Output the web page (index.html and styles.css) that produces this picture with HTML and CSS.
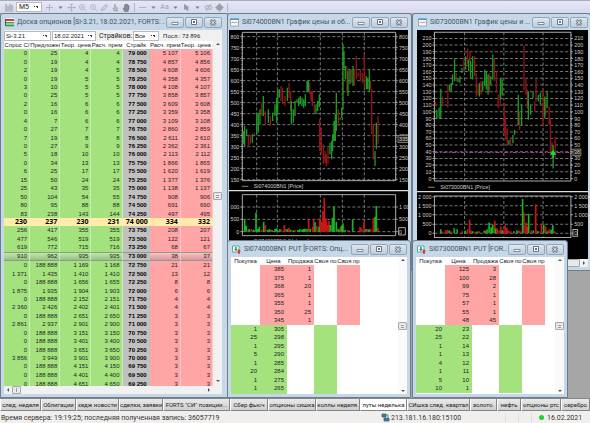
FILE: index.html
```html
<!DOCTYPE html>
<html lang="ru">
<head>
<meta charset="utf-8">
<title>Торговый терминал</title>
<link rel="stylesheet" href="styles.css">
</head>
<body>
<svg class="defs" aria-hidden="true">
  <symbol id="min" viewBox="0 0 16 9"><path d="M5 4.500h6v2H5z" fill="#fff" stroke="#68747f" stroke-width=".8"/></symbol>
  <symbol id="max" viewBox="0 0 16 9"><path d="M5.500 1.500h5v5h-5z" fill="#fff" stroke="#68747f"/><path d="M7 3h2v2h-2z" fill="#68747f"/></symbol>
  <symbol id="close" viewBox="0 0 16 9"><path d="M5.500 2l5 5m0-5l-5 5" stroke="#68747f" stroke-width="2.600"/><path d="M5.700 2.200l4.600 4.600m0-4.600l-4.600 4.600" stroke="#fff" stroke-width="1"/></symbol>
  <symbol id="chartico" viewBox="0 0 9 9"><path d="M.5 1h8v7h-8z" fill="#fff" stroke="#8eacc6"/><path d="M0 .500h9v1.500h-9z" fill="#4b9cc8"/><path d="M1.500 5l1.500-1 1.500 1 1.500-1 1.500 1" fill="none" stroke="#d0604c" stroke-width=".8"/></symbol>
  <symbol id="quoteico" viewBox="0 0 9 9"><path d="M.5 1h6.500v6h-6.500z" fill="#fff" stroke="#5f9fbd"/><path d="M2 4h1.200v-2h1.500v2h1.200l-2 2.300z" fill="#20a040"/><path d="M5 6.500l2-2.500 2 2.500h-1v2.300h-2v-2.300z" fill="#d93a32"/></symbol>
  <symbol id="boardico" viewBox="0 0 9 9"><path d="M1 0h8v9h-8z" fill="#f4f4f4"/><path d="M1 1h8v2h-8z" fill="#c5423b"/><path d="M1 4h8v1.500h-8z" fill="#35a04d"/><path d="M1 6.500h8v2h-8z" fill="#2e9b55"/><path d="M0 1h1v7h-1z" fill="#555"/></symbol>
</svg>

<header class="toolbar">
  <button aria-label="График"><svg viewBox="0 0 9 9"><path d="M1 1v7h7M3 7v-4M5 7v-6M7 7v-5" stroke="#999da8" stroke-width="1.200" fill="none"/></svg></button>
  <select class="frame" aria-label="Интервал"><option>M5</option></select>
  <button class="first" aria-label="Курсор"><svg viewBox="0 0 9 9"><path d="M4.500 1v7M1 4.500h7" stroke="#aeb1bd"/></svg></button>
  <button aria-label="Вид курсора"><svg viewBox="0 0 9 9"><path d="M2.500 3.500h4l-2 2.500z" fill="#777b86"/></svg></button>
  <button aria-label="Сдвиг"><svg viewBox="0 0 9 9"><path d="M4.500 1v7M1 4.500h7M3.300 2l1.200-1.200 1.200 1.200M3.300 7l1.200 1.200 1.200-1.200M2 3.300l-1.200 1.200 1.200 1.200M7 3.300l1.200 1.200-1.200 1.200" stroke="#a5a8b4" stroke-width=".8" fill="none"/></svg></button>
  <button aria-label="Увеличить"><svg viewBox="0 0 9 9"><circle cx="4" cy="4" r="2.500" fill="none" stroke="#b5b8c4"/><path d="M6 6l2 2M3 4h2M4 3v2" stroke="#b5b8c4"/></svg></button>
  <button aria-label="Уменьшить"><svg viewBox="0 0 9 9"><circle cx="4" cy="4" r="2.500" fill="none" stroke="#b5b8c4"/><path d="M6 6l2 2M3 4h2" stroke="#b5b8c4"/></svg></button>
  <button aria-label="Карандаш"><svg viewBox="0 0 9 9"><path d="M1.500 7.500l.5-2 4-4 1.500 1.500-4 4z" fill="#d5d7df" stroke="#9c9fab" stroke-width=".8"/></svg></button>
  <button aria-label="Выбор"><svg viewBox="0 0 9 9"><path d="M3 8l-1-3 1.500.500v-4h1v3h2v3.500z" fill="#b6b9c3" stroke="#999da8" stroke-width=".6"/></svg></button>
  <button aria-label="Рука"><svg viewBox="0 0 9 9"><path d="M2.500 8.500l-1.500-3.500 1.500.500v-3.500h1v-1h1v.5h1.200v1h1.300v3l-1 3z" fill="#858993" stroke="#666a75" stroke-width=".5"/></svg></button>
  <i class="rule"></i>
  <button aria-label="Линия"><svg viewBox="0 0 9 9"><path d="M1 4.500h7" stroke="#aeb1bd"/></svg></button>
  <button aria-label="Вид линии"><svg viewBox="0 0 9 9"><path d="M2.500 3.500h4l-2 2.500z" fill="#777b86"/></svg></button>
  <button aria-label="Текст">Aa</button>
  <button aria-label="Вид текста"><svg viewBox="0 0 9 9"><path d="M2.500 3.500h4l-2 2.500z" fill="#777b86"/></svg></button>
  <button aria-label="Метка"><svg viewBox="0 0 9 9"><path d="M2 1l5 3-1 1 1 2-2 1-1-2-2 1z" fill="#9699a5"/></svg></button>
  <button aria-label="Вид метки"><svg viewBox="0 0 9 9"><path d="M2.500 3.500h4l-2 2.500z" fill="#777b86"/></svg></button>
  <button aria-label="Скрыть"><svg viewBox="0 0 9 9"><ellipse cx="4.500" cy="4.500" rx="3.500" ry="2" fill="none" stroke="#a5a8b4"/><circle cx="4.500" cy="4.500" r="1" fill="#a5a8b4"/><path d="M2 8l5-7" stroke="#a5a8b4" stroke-width=".8"/></svg></button>
  <button aria-label="Слои"><svg viewBox="0 0 9 9"><path d="M4.500 0l1.500 2h1v1l2 1.500-2 1.500v1h-1l-1.500 2-1.500-2h-1v-1l-2-1.500 2-1.500v-1h1z" fill="#9ca0aa"/></svg></button>
  <i class="rule"></i>
</header>

<main class="desktop">
  <section class="window board">
    <div class="title"><svg class="ico"><use href="#boardico"/></svg><h2>Доска опционов [Si-3.21, 18.02.2021, FORTS: ...</h2>
      <button aria-label="Свернуть"><svg><use href="#min"/></svg></button><button aria-label="Развернуть"><svg><use href="#max"/></svg></button><button aria-label="Закрыть"><svg><use href="#close"/></svg></button></div>
    <div class="client">
      <form class="filters">
        <select class="contract" aria-label="Контракт"><option>Si-3.21</option></select>
        <select class="expiry" aria-label="Дата"><option>18.02.2021</option></select>
        <label for="strikes">Страйков:</label><select id="strikes" class="count"><option>Все</option></select>
        <span>Посл.: 73 896</span>
      </form>
      <div class="pane">
        <div class="clip">
          <table class="options">
            <colgroup><col class="c26"><col class="c30"><col class="c31"><col class="c31"><col class="c27"><col class="c31"><col class="c32"></colgroup>
            <thead><tr><th>Спрос С/</th><th>Предложен</th><th>Теор. цена</th><th>Расч. прем</th><th>Страйк</th><th>Расч. прем</th><th>Теор. цена (</th></tr></thead>
            <tbody id="options"></tbody>
          </table>
        </div>
        <div class="vbar"><i class="up"></i><i class="thumb"></i><i class="down"></i></div>
      </div>
      <div class="hbar"><i class="left"></i><i class="thumb"></i><i class="right"></i></div>
    </div>
  </section>

  <section class="window chart-a">
    <div class="title"><svg class="ico"><use href="#chartico"/></svg><h2>Si074000BN1 График цены и об...</h2>
      <button aria-label="Свернуть"><svg><use href="#min"/></svg></button><button aria-label="Развернуть"><svg><use href="#max"/></svg></button><button aria-label="Закрыть"><svg><use href="#close"/></svg></button></div>
    <div class="client dark"><svg id="chartA" class="chart" viewBox="12 87 537 690" preserveAspectRatio="xMinYMin slice" role="img" aria-label="Si074000BN1"></svg></div>
  </section>

  <section class="window chart-b">
    <div class="title"><svg class="ico"><use href="#chartico"/></svg><h2>Si073000BN1 График цены и ...</h2>
      <button aria-label="Свернуть"><svg><use href="#min"/></svg></button><button aria-label="Развернуть"><svg><use href="#max"/></svg></button><button aria-label="Закрыть"><svg><use href="#close"/></svg></button></div>
    <div class="client dark"><svg id="chartB" class="chart" viewBox="36 87 510 696" preserveAspectRatio="xMinYMin slice" role="img" aria-label="Si073000BN1"></svg>
      <div class="hbar"><i class="left"></i><i class="thumb wide"></i><i class="right"></i></div></div>
  </section>

  <section class="window book-a">
    <div class="title"><svg class="ico"><use href="#quoteico"/></svg><h2>Si074000BN1 PUT [FORTS: Опц...</h2>
      <button aria-label="Свернуть"><svg><use href="#min"/></svg></button><button aria-label="Развернуть"><svg><use href="#max"/></svg></button><button aria-label="Закрыть"><svg><use href="#close"/></svg></button></div>
    <div class="client pane">
      <div class="clip">
        <table class="book">
          <colgroup><col class="c29"><col class="c27"><col class="c27"><col class="c23"><col class="c23"><col></colgroup>
          <thead><tr><th>Покупка</th><th>Цена</th><th>Продажа</th><th>Своя по</th><th>Своя пр</th><th></th></tr></thead>
          <tbody id="bookA"></tbody>
        </table>
      </div>
      <div class="vbar"><i class="up"></i><i class="thumb mid"></i><i class="down"></i></div>
    </div>
  </section>

  <section class="window book-b">
    <div class="title"><svg class="ico"><use href="#quoteico"/></svg><h2>Si073000BN1 PUT [FOR...</h2>
      <button aria-label="Свернуть"><svg><use href="#min"/></svg></button><button aria-label="Развернуть"><svg><use href="#max"/></svg></button><button aria-label="Закрыть"><svg><use href="#close"/></svg></button></div>
    <div class="client pane">
      <div class="clip">
        <table class="book">
          <colgroup><col class="c29"><col class="c27"><col class="c27"><col class="c23"><col class="c23"><col></colgroup>
          <thead><tr><th>Покупка</th><th>Цена</th><th>Продажа</th><th>Своя по</th><th>Своя пр</th><th></th></tr></thead>
          <tbody id="bookB"></tbody>
        </table>
      </div>
      <div class="vbar"><i class="up"></i><i class="thumb mid"></i><i class="down"></i></div>
    </div>
  </section>
</main>

<nav class="tabs">
  <button>след. неделя</button><button>Облигации</button><button>хедж новости</button><button>сделки, заявки</button><button>FORTS "СИ" позиции...</button><button>Сбер фьюч</button><button>опционы сишка</button><button>коллы неделя.</button><button class="active">путы неделька</button><button>СИшка след. квартал</button><button>золото.</button><button>нефть</button><button>опционы ртс</button><button>серебро</button>
</nav>
<footer class="status">
  <span class="msg">Время сервера: 19:19:25; последняя полученная запись: 36057719</span>
  <span class="host"><svg viewBox="0 0 9 9"><path d="M1 1h4v3h-4zM3 5h5v3h-5z" fill="#3f7fae" stroke="#35506b" stroke-width=".7"/><path d="M5 2h2v2" stroke="#38a04c" fill="none"/></svg>213.181.16.180:15100</span>
  <i></i><i></i><i></i>
  <span class="date"><b></b>16.02.2021</span>
</footer>
<script src="app.js"></script>
</body>
</html>
```
FILE: styles.css
```css
* { box-sizing: border-box; }

body {
  margin: 0;
  height: 100vh;
  display: flex;
  flex-direction: column;
  overflow: hidden;
  background: #a6a6a6;
  color: #222;
  font: 7px/8px Roboto, "Noto Sans", sans-serif;
}

button, select { font: inherit; color: inherit; margin: 0; padding: 0; border: 0; background: none; }
button svg { display: block; }
.defs { display: none; }

/* toolbar */
.toolbar {
  flex: none;
  height: 13px;
  display: flex;
  align-items: center;
  padding-left: 4px;
  border-top: 1px solid #aaaabc;
  background: linear-gradient(#e6e7f6, #d6d8ec);
}
.toolbar button { width: 11px; flex: none; color: #a0a3ae; }
.toolbar svg { width: 9px; height: 9px; margin: 0 1px; }
.toolbar .first { margin-left: 2px; }
.toolbar .rule { width: 1px; height: 9px; margin: 0 2px; background: #b4b7ca; }

select {
  appearance: none;
  height: 10px;
  padding-left: 2px;
  border: 1px solid #b8bcc2;
  line-height: 8px;
  background: linear-gradient(to bottom left, #333 50%, transparent 50%) no-repeat right 3px center / 2px 2px,
              linear-gradient(to bottom right, #333 50%, transparent 50%) no-repeat right 5px center / 2px 2px, #fff;
}
.frame { width: 26px; margin-left: 1px; }

/* desktop windows */
.desktop { position: relative; flex: 1; min-height: 0; overflow: hidden; }
.window {
  position: absolute;
  display: flex;
  flex-direction: column;
  border: 1px solid #6d7c8a;
  border-radius: 3px 3px 0 0;
  background: #c6d8e8;
}
.title {
  flex: none;
  height: 16px;
  display: flex;
  align-items: center;
  gap: 1px;
  color: #45525f;
}
.title .ico { flex: none; width: 9px; height: 9px; margin: 0 2px 0 1px; }
.title h2 { flex: 1; min-width: 0; margin: 0; overflow: hidden; white-space: nowrap; font: 7px/10px Roboto, "Noto Sans", sans-serif; }
.title button { flex: none; width: 18px; height: 11px; border: 1px solid #94a5b5; border-radius: 2px; background: linear-gradient(#dce7f1, #bccddc); }
.title button svg { width: 16px; height: 9px; }
.client { flex: 1; min-height: 0; overflow: hidden; background: #fff; }
.dark { background: #000; display: flex; flex-direction: column; }

.board { left: 0; top: 0; width: 229px; height: 385px; padding: 0 6px 3px 3px; }
.chart-a { left: 227px; top: 0; width: 185px; height: 258px; padding: 0 3px 3px 1px; }
.chart-b { left: 412px; top: 0; width: 179px; height: 258px; padding: 0 2px 3px 4px; }
.book-a { left: 227px; top: 227px; width: 184px; height: 158px; padding: 0 3px 3px 3px; }
.book-b { left: 412px; top: 227px; width: 156px; height: 158px; padding: 0 3px 3px 3px; }

.board .client { display: flex; flex-direction: column; }
.filters { flex: none; height: 11px; display: flex; align-items: center; gap: 1px; margin: 0; background: #f0f0f0; }
.filters select { font-family: "Liberation Sans", sans-serif; font-size: 6px; padding-left: 1px; }
.filters .contract { width: 47px; }
.filters .expiry { width: 44px; }
.filters .count { width: 26px; }
.filters label { margin-left: 2px; }
.filters span { margin-left: 3px; font-size: 6px; }

.pane { flex: 1; min-height: 0; display: flex; overflow: hidden; }
.clip { flex: 1; min-width: 0; overflow: hidden; }

/* data tables */
table {
  width: 100%;
  table-layout: fixed;
  border-collapse: separate;
  border-spacing: 0;
  font: 6px/8px "Liberation Sans", sans-serif;
}
.options { height: 347px; }
.book { height: 144px; }
.c23 { width: 23px; } .c26 { width: 26px; } .c27 { width: 27px; } .c29 { width: 29px; }
.c30 { width: 30px; } .c31 { width: 31px; } .c32 { width: 32px; }
th { padding: 0; overflow: hidden; white-space: nowrap; font-weight: normal; text-align: center; background: #fff; }
td { padding: 0 3px 0 0; white-space: nowrap; text-align: right; }
.options td { border-right: 1px solid #c9edb8; padding-right: 2px; }
.g { background: #a4e27e; }
.r { background: #ffa5a5; }
.options .r { border-right-color: #ffc9c9; }
.options .s { background: #c0c0c0; border-right-color: #c0c0c0; font-weight: bold; color: #000; }
.options .money td { background: #ffebac; border-right-color: #ffebac; font: bold 7px/8px "Noto Sans", sans-serif; color: #000; }
.options .money .s { padding-right: 1px; }
.picked td { background-image: linear-gradient(rgba(255,255,255,.3), rgba(125,125,145,.35)); border-top: 1px solid #8c9c8c; border-bottom: 1px solid #8c9c8c; line-height: 7px; }

/* scroll bars */
.vbar { flex: none; width: 9px; display: flex; flex-direction: column; align-items: center; justify-content: space-between; padding: 2px 0; background: #f1f1f1; }
.book-a .vbar, .book-b .vbar { background: #fafafa; }
.hbar { flex: none; height: 8px; display: flex; align-items: center; gap: 3px; padding: 0 12px 0 3px; background: #f1f1f1; }
.up, .down, .left, .right { border: 2px solid transparent; }
.up { border-bottom-color: #555; border-top: 0; }
.down { border-top-color: #555; border-bottom: 0; }
.left { border-right-color: #555; border-left: 0; }
.right { border-left-color: #555; border-right: 0; margin-left: auto; }
.thumb { width: 9px; height: 8px; border: 1px solid #a5a9ad; border-radius: 1px; background: repeating-linear-gradient(#eee 0 1px, #999 1px 2px) content-box, #e8e8e8; padding: 1px 2px; }
.board .vbar .thumb { margin-bottom: 13px; }
.board .vbar .up { margin-bottom: 0; }
.board .vbar { padding-bottom: 4px; }
.board .vbar .thumb { margin-bottom: 16px; margin-top: 0; position: relative; bottom: 9px; }
.hbar .thumb { background: repeating-linear-gradient(90deg, #eee 0 1px, #999 1px 2px) content-box, #e8e8e8; }
.hbar .wide { flex: 1; padding: 0 60px; }
.chart-b .hbar { padding-right: 3px; }

/* charts */
.chart { flex: none; display: block; width: 100%; min-height: 0; }
.chart-b .chart { flex: 1; }
.grid { stroke: #777; stroke-width: 3; stroke-dasharray: 9 6; fill: none; }
.axis { stroke: #aaa; stroke-width: 3; fill: none; }
.up-bar { stroke: #1d9a24; stroke-width: 4; fill: none; }
.dn-bar { stroke: #8c1616; stroke-width: 4; fill: none; }
.up-vol { stroke: #14b81c; stroke-width: 5; fill: none; }
.dn-vol { stroke: #cc1414; stroke-width: 5; fill: none; }
.lbl { fill: #ccc; font: 16px "Liberation Sans", sans-serif; }
.end { text-anchor: end; }
.split { stroke: #ddd; stroke-width: 4; }
.level { stroke: #b030b0; stroke-width: 3; stroke-dasharray: 12 5 4 5; }
.legend { stroke: #8a8a50; stroke-width: 3; }
.mark { fill: #222; stroke: #aaa477; stroke-width: 2; }
.marker { fill: #00f020; }

/* workspace tabs */
.tabs {
  flex: none;
  height: 14px;
  display: grid;
  grid-template-columns: 41fr 35fr 43fr 44fr 67fr 38fr 48fr 44fr 47fr 63fr 27fr 24fr 40fr 29fr;
  padding-bottom: 1px;
  border-top: 1px solid #888;
  background: #efefef;
}
.tabs button { min-width: 0; overflow: hidden; white-space: nowrap; border: 1px solid #858585; border-left-color: #fff; border-top: 0; background: linear-gradient(#e9e9e9, #cfcfcf); font-size: 6px; line-height: 10px; }
.tabs .active { background: #fff; }

.status { flex: none; height: 11px; display: flex; align-items: center; background: #f1efee; color: #333; white-space: nowrap; }
.msg { flex: 1; padding-left: 1px; }
.host { display: flex; align-items: center; gap: 1px; width: 124px; }
.host svg { width: 9px; height: 9px; }
.status i { width: 13px; height: 9px; border-left: 1px solid #dcdcdc; }
.status i + i + i { width: 8px; }
.date { display: flex; align-items: center; gap: 3px; width: 51px; }
.date b { width: 5px; height: 5px; border-radius: 50%; background: #1fd32a; }
```
FILE: app.js
```js
const cell = (cls, value) => `<td class="${cls}">${value}</td>`;

// bid, ask, theoretical, settlement, strike, put settlement, put theoretical
const board = `0|25|4|4|79 000|5 107|5 106
0|19|4|4|78 750|4 857|4 856
2|19|4|5|78 500|4 608|4 606
0|19|5|5|78 250|4 358|4 357
3|10|5|5|78 000|4 108|4 107
0|25|5|5|77 750|3 858|3 857
2|16|6|6|77 500|3 609|3 608
0|16|6|6|77 250|3 359|3 358
4|7|6|6|77 000|3 109|3 108
0|27|7|7|76 750|2 860|2 859
7|19|8|8|76 500|2 611|2 610
0|27|9|9|76 250|2 362|2 361
5|18|10|10|76 000|2 113|2 112
0|34|13|13|75 750|1 866|1 865
6|25|17|17|75 500|1 620|1 619
15|50|24|24|75 250|1 377|1 376
25|43|35|35|75 000|1 138|1 137
50|104|54|55|74 750|908|906
80|95|88|88|74 500|691|690
83|238|143|144|74 250|497|495
230|237|230|231|74 000|334|332
256|417|355|355|73 750|208|207
477|546|519|519|73 500|122|121
619|772|715|716|73 250|68|67
910|962|935|935|73 000|38|37
0|188 888|1 169|1 168|72 750|21|21
1 371|1 435|1 410|1 410|72 500|13|12
0|188 888|1 656|1 655|72 250|8|8
1 875|1 935|1 904|1 903|72 000|6|6
0|188 888|2 152|2 151|71 750|4|4
2 360|2 426|2 402|2 401|71 500|4|4
0|188 888|2 651|2 650|71 250|3|3
2 861|2 937|2 901|2 900|71 000|3|3
0|188 888|3 151|3 150|70 750|3|3
0|188 888|3 401|3 400|70 500|3|3
0|188 888|3 651|3 650|70 250|3|3
3 856|3 949|3 901|3 900|70 000|3|3
0|188 888|4 151|4 150|69 750|3|3
0|188 888|4 401|4 400|69 500|3|3
0|188 888|4 651|4 650|69 250|3|3`;
const tone = ['g', 'g', 'g', 'g', 's', 'r', 'r'];
document.getElementById('options').innerHTML = board.split('\n').map(line => {
  const v = line.split('|');
  const cls = v[4] === '74 000' ? 'money' : v[4] === '73 000' ? 'picked' : '';
  return `<tr class="${cls}">${v.map((x, i) => cell(tone[i], x)).join('')}</tr>`;
}).join('');

function book(id, asks, bids) {
  const rows = asks.map(([p, q]) => `<tr>${cell('', '')}${cell('r', p)}${cell('r', q)}${cell('', '')}${cell('r', '')}<td></td></tr>`)
    .concat(bids.map(([q, p]) => `<tr>${cell('g', q)}${cell('g', p)}${cell('', '')}${cell('g', '')}${cell('', '')}<td></td></tr>`));
  document.getElementById(id).innerHTML = rows.join('');
}
book('bookA', [[385, 1], [375, 1], [368, 20], [365, 1], [355, 1], [350, 25], [345, 1]],
  [[1, 305], [25, 298], [1, 295], [5, 290], [1, 285], [20, 284], [1, 275], [1, 265], ['&nbsp;', '']]);
book('bookB', [[125, 3], [100, 28], [99, 2], [75, 1], [57, 1], [55, 1], [48, 45]],
  [[20, 23], [25, 22], [1, 14], [1, 13], [4, 12], [1, 11], [5, 10], [10, 1]]);
document.getElementById('bookB').insertAdjacentHTML('beforeend', '<tr><td>&nbsp;</td></tr>');

// "x,top,bottom" triples become vertical strokes
const bars = s => s.trim().split(/\s+/).map(b => { const [x, a, z] = b.split(','); return `M${x} ${a}V${z}`; }).join('');
const vols = (s, base) => s.trim().split(/\s+/).map(b => { const [x, h] = b.split(','); return `M${x} ${base}v-${h}`; }).join('');

function chart(id, c) {
  const [l, r] = c.x;
  let o = '';
  const line = (cls, d) => { o += `<path class="${cls}" d="${d}"/>`; };
  const text = (x, y, t, cls) => { o += `<text class="lbl ${cls || ''}" x="${x}" y="${y + 6}">${t}</text>`; };
  c.labels.concat(c.volLabels).forEach(([y, t]) => {
    line('grid', `M${l} ${y}H${r}`);
    line('axis', `M${l - 6} ${y}H${l}M${r} ${y}h6`);
    text(l - 9, y, t, 'end');
    text(r + 10, y, t);
  });
  c.cols.forEach(x => line('grid', `M${x} 94V${c.bottom}M${x} ${c.volTop}V${c.volBottom}`));
  line('axis', `M${l} 94H${r}V${c.bottom}H${l}ZM${l} ${c.volTop}H${r}V${c.volBottom}H${l}Z`);
  let ticks = '';
  for (let y = 102; y < c.bottom; y += 11) ticks += `M${l - 3} ${y}h3M${r} ${y}h3`;
  line('axis', ticks);
  line('dn-bar', bars(c.down)); line('up-bar', bars(c.up));
  line('dn-vol', vols(c.volDown, c.base)); line('up-vol', vols(c.volUp, c.base));
  line('legend', `M${l - 2 - c.shift} 556h20`);
  text(l + 34 - c.shift, 556, c.name + ' [Price]');
  text(l + 34 - c.shift, 720, c.name + ' [Volume]');
  line('split', `M0 569H600`);
  document.getElementById(id).innerHTML = o + c.extra;
}

chart('chartA', {
  name: 'Si074000BN1', shift: 0, x: [52, 512], bottom: 539, volTop: 581, volBottom: 704, base: 692,
  labels: [800, 750, 700, 650, 600, 550, 500, 450, 400, 350, 300, 250, 200, 150].map((v, i) => [107 + i * 33, v]),
  volLabels: [[618, '1 000'], [655, '500'], [692, '0']],
  cols: [95, 157, 286, 352, 418],
  up: `55,390,430 59,375,435 65,385,405 82,400,425 95,340,400 100,335,395 105,325,370 115,285,345 130,325,365 143,335,360 150,310,345 155,290,365 158,265,335 163,265,290 187,260,300 199,300,370 205,325,365 210,300,345 216,295,305 221,290,315 226,285,310 231,290,315 236,295,320 241,280,315 246,240,275 250,238,270 273,310,340 278,300,330 283,280,318 315,425,460 320,420,475 323,400,450 327,360,420 331,340,420 334,275,390 345,350,356 350,320,350 354,130,325 357,150,200 361,195,235 369,210,285 375,205,250 384,195,255 424,225,265 428,230,265 433,205,270 450,450,495 454,365,445`,
  down: `70,400,438 76,402,430 88,395,402 110,305,345 121,330,370 136,345,375 168,255,300 173,260,310 180,285,315 192,245,290 197,270,330 254,245,280 258,270,300 262,270,315 268,310,335 284,355,450 289,380,460 295,430,490 300,450,485 304,460,495 309,440,490 340,325,375 366,195,275 380,205,245 388,205,255 394,165,235 400,215,227 406,205,240 412,215,245 418,160,260 437,240,265 440,265,400 445,370,475 459,345,430`,
  volUp: `59,38 64,18 73,8 86,6 93,57 98,8 103,15 116,30 127,6 133,8 141,5 150,8 155,10 164,7 187,7 197,6 205,4 218,5 224,8 230,6 235,8 240,9 246,8 256,9 270,28 282,15 316,20 322,42 327,76 334,30 341,7 349,18 354,25 361,5 383,36 423,8 432,7 450,45 454,77`,
  volDown: `70,6 80,8 110,6 121,20 137,6 168,7 178,20 183,8 192,12 210,4 251,35 263,14 266,36 275,18 284,40 289,30 294,62 298,101 303,40 308,20 312,32 338,8 346,12 370,5 405,14 410,10 417,30 428,8 437,9 445,40 459,12`,
  extra: '<rect class="mark" x="519" y="403" width="34" height="22"/><text class="lbl" x="522" y="420">335</text><path class="axis" d="M521 680h20v22h-20z"/>'
});

chart('chartB', {
  name: 'Si073000BN1', shift: 17, x: [88, 495], bottom: 537, volTop: 582, volBottom: 706, base: 693,
  labels: Array.from({ length: 22 }, (_, i) => [112 + i * 20 - Math.round(i * .1), 210 - i * 10]),
  volLabels: [[584, '2 000'], [611, '1 500'], [638, '1 000'], [666, '500'], [693, '0']],
  cols: [178, 295, 412],
  up: `95,325,350 102,318,352 107,262,350 133,250,270 138,245,270 142,220,250 148,173,240 158,230,242 164,225,245 170,200,215 181,165,205 190,175,210 196,180,230 202,165,235 222,245,285 232,240,270 238,205,255 243,210,265 248,220,280 256,225,250 262,160,235 285,230,295 290,235,282 310,415,430 322,400,425 327,385,400 338,280,370 348,310,370 368,270,355 375,310,340 382,270,290 398,280,300 404,275,310 417,285,350 424,268,320 442,430,500`,
  down: `91,300,315 113,285,315 121,300,302 128,250,318 153,215,240 176,170,212 187,142,190 194,150,185 208,165,225 213,215,285 218,250,280 227,240,280 252,215,272 267,170,240 273,210,270 278,280,320 284,270,315 296,305,395 300,345,415 305,380,430 315,410,430 342,330,385 355,133,270 361,230,280 365,265,320 387,300,330 391,232,300 412,260,375 420,295,340 430,315,370 434,350,450 439,420,470 448,405,470`,
  volUp: `107,12 132,8 147,15 156,12 180,8 202,6 216,5 237,8 245,12 251,32 257,18 262,26 270,14 290,8 325,6 334,8 351,102 369,58 383,8 398,6 414,26 425,6 436,10 441,24`,
  volDown: `113,4 121,9 127,10 138,6 170,6 187,12 193,40 197,8 210,4 221,6 240,7 268,37 275,15 281,8 286,20 292,10 299,24 304,16 309,8 315,6 339,9 344,6 355,62 361,32 366,20 377,8 390,86 394,7 407,28 420,20 430,12 446,6`,
  extra: '<path class="level" d="M88 452H495"/><path class="marker" d="M432 459l10-14 10 14zM440 459h4v10h-4z"/><rect class="mark" x="501" y="442" width="24" height="20"/><text class="lbl" x="504" y="458">38</text><path class="axis" d="M501 682h14v20h-14z"/>'
});
```
